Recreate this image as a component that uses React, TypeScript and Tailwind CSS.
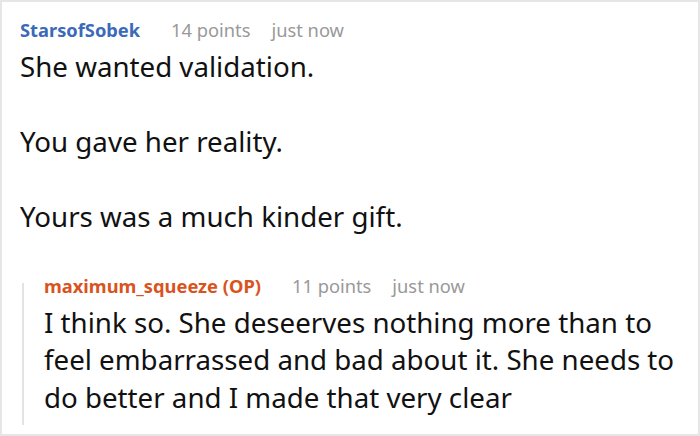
import React from "react";

interface ICommentProps {
  author: string;
  authorColor: string;
  points: number;
  time: string;
  lines: string[];
}

const Comment: React.FC<ICommentProps> = ({ author, authorColor, points, time, lines }) => {
  return (
    <div>
      <div className="flex items-center h-[24px] text-[18.3px] leading-[24px]">
        <span className={`font-bold ${authorColor}`}>{author}</span>
        <span className="ml-[31px] text-[#999999]">{points} points</span>
        <span className="ml-[21px] text-[#999999]">{time}</span>
      </div>
      <div className="mt-[6px] text-[27.7px] leading-[37.5px] text-[#111111] whitespace-nowrap">
        {lines.map((line, i) => (
          <p key={i} className="min-h-[37.5px]">
            {line}
          </p>
        ))}
      </div>
    </div>
  );
};

export default function App() {
  return (
    <div
      className="w-[700px] h-[436px] border-2 border-[#e6e6e6] bg-white pt-[16px] pl-[18px] overflow-hidden"
      style={{ fontFamily: '"Noto Sans", "Open Sans", sans-serif' }}
    >
      <Comment
        author="StarsofSobek"
        authorColor="text-[#3a6ab8]"
        points={14}
        time="just now"
        lines={[
          "She wanted validation.",
          "",
          "You gave her reality.",
          "",
          "Yours was a much kinder gift.",
        ]}
      />
      <div className="mt-[38px] ml-[2px] flex">
        <div className="w-[2px] bg-[#e3e3e3] mt-[9px] mb-[-9px]" />
        <div className="pl-[20px]">
          <Comment
            author="maximum_squeeze (OP)"
            authorColor="text-[#d9531e]"
            points={11}
            time="just now"
            lines={[
              "I think so. She deseerves nothing more than to",
              "feel embarrassed and bad about it. She needs to",
              "do better and I made that very clear",
            ]}
          />
        </div>
      </div>
    </div>
  );
}
